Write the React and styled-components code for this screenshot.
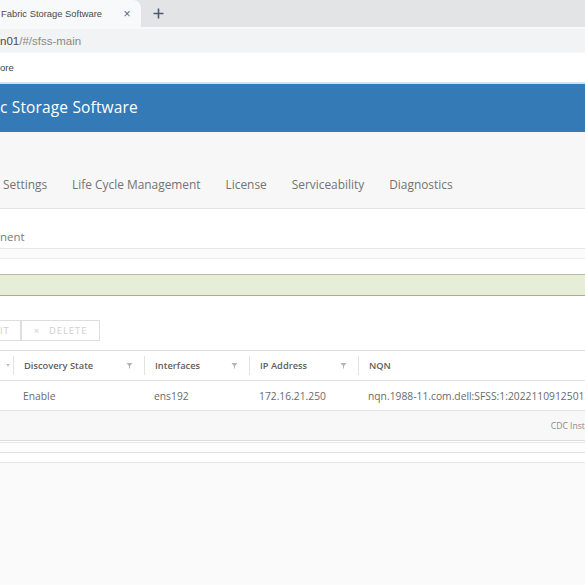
import React from "react";
import styled, { createGlobalStyle } from "styled-components";

const Global = createGlobalStyle`
  html, body { margin: 0; padding: 0; background: #fafafa; }
  body { font-family: "Open Sans", "Liberation Sans", sans-serif; overflow: hidden; }
  #root { width: 585px; height: 585px; overflow: hidden; }
`;

const Page = styled.div`
  width: 585px;
  height: 585px;
  display: flex;
  flex-direction: column;
  background: #fafafa;
  overflow: hidden;
`;

const TabStrip = styled.div`
  height: 27px;
  background: #e3e4e6;
  display: flex;
  align-items: stretch;
  flex-shrink: 0;
`;

const ActiveTab = styled.div`
  width: 141px;
  background: #f8f9fa;
  border-top-right-radius: 8px;
  display: flex;
  align-items: center;
  padding-left: 1px;
  box-sizing: border-box;
  font-family: "Liberation Sans", Arial, sans-serif;
  font-size: 9.4px;
  color: #4a4a4a;
`;

const TabTitle = styled.span`
  flex: 1;
  white-space: nowrap;
`;

const TabClose = styled.span`
  width: 10px;
  margin-right: 9px;
  display: flex;
  justify-content: center;
  color: #666;
  font-size: 12px;
`;

const NewTab = styled.div`
  width: 34px;
  display: flex;
  align-items: center;
  justify-content: center;
`;

const Toolbar = styled.div`
  height: 26px;
  background: #f8f9fa;
  padding-top: 2px;
  flex-shrink: 0;
  box-sizing: border-box;
  display: flex;
`;

const Omnibox = styled.div`
  flex: 1;
  height: 23px;
  background: #f1f3f4;
  display: flex;
  align-items: center;
  font-family: "Liberation Sans", Arial, sans-serif;
  font-size: 11.5px;
  color: #8a8a8a;
  white-space: nowrap;
`;

const Host = styled.span`
  color: #4a4a4a;
`;

const Bookmarks = styled.div`
  height: 29px;
  background: #ffffff;
  display: flex;
  align-items: center;
  font-family: "Liberation Sans", Arial, sans-serif;
  font-size: 9.5px;
  color: #444;
  border-bottom: 2px solid #cfe3f1;
  flex-shrink: 0;
`;

const Header = styled.div`
  height: 48px;
  background: #337ab7;
  color: #ffffff;
  display: flex;
  align-items: center;
  padding-bottom: 2px;
  box-sizing: border-box;
  font-size: 15.5px;
  letter-spacing: 0.15px;
  flex-shrink: 0;
  white-space: nowrap;
`;

const SubNav = styled.div`
  height: 77px;
  background: #f7f7f7;
  border-bottom: 1px solid #e4e4e4;
  display: flex;
  align-items: flex-end;
  padding-bottom: 16px;
  box-sizing: border-box;
  flex-shrink: 0;
`;

const NavItem = styled.span`
  font-size: 11.9px;
  color: #747474;
  white-space: nowrap;
  margin-left: ${(p) => p.$gap}px;
`;

const Content = styled.div`
  background: #ffffff;
  display: flex;
  flex-direction: column;
  flex-shrink: 0;
`;

const Breadcrumb = styled.div`
  height: 39px;
  display: flex;
  align-items: center;
  padding-top: 15px;
  box-sizing: border-box;
  font-size: 11.5px;
  color: #7a7a7a;
`;

const Divider = styled.div`
  height: 9px;
  border-top: 1px solid #e6e6e6;
  border-bottom: 1px solid #ececec;
  background: #fbfbfb;
`;

const Banner = styled.div`
  margin-top: 15px;
  height: 20px;
  background: #e6eed7;
  border-top: 1px solid #b5bf9f;
  border-bottom: 1px solid #a5b08a;
`;

const Actions = styled.div`
  margin-top: 24px;
  height: 21px;
  display: flex;
`;

const ActionButton = styled.div`
  height: 21px;
  box-sizing: border-box;
  border: 1px solid #dedede;
  border-left: ${(p) => (p.$cut ? "none" : "1px solid #dedede")};
  width: ${(p) => p.$w}px;
  display: flex;
  align-items: center;
  justify-content: ${(p) => (p.$cut ? "flex-start" : "center")};
  gap: 9px;
  font-size: 9.5px;
  letter-spacing: 0.9px;
  color: #cfcfcf;
  text-transform: uppercase;
`;

const Grid = styled.div`
  margin-top: 9px;
  border-top: 1px solid #dcdcdc;
  display: flex;
  flex-direction: column;
`;

const Row = styled.div`
  height: 30px;
  display: grid;
  grid-template-columns: 13px 131px 105px 109px 1fr;
  border-bottom: 1px solid #e2e2e2;
  box-sizing: border-box;
`;

const HeadCell = styled.div`
  display: flex;
  align-items: center;
  justify-content: space-between;
  padding: 0 11px 0 10px;
  border-left: ${(p) => (p.$first ? "none" : "1px solid #e3e3e3")};
  margin: ${(p) => (p.$first ? "0" : "5px 0")};
  font-size: 9.3px;
  font-weight: 600;
  color: #5e5e5e;
  white-space: nowrap;
  overflow: hidden;
`;

const Cell = styled.div`
  display: flex;
  align-items: center;
  padding-left: ${(p) => (p.$first ? 0 : 10)}px;
  font-size: 10.3px;
  color: #6a6a6a;
  white-space: nowrap;
  overflow: hidden;
`;

const Footer = styled.div`
  height: 30px;
  background: #f8f8f8;
  border-bottom: 1px solid #dcdcdc;
  display: flex;
  align-items: center;
  justify-content: flex-end;
  font-size: 8.6px;
  color: #8a8a8a;
  white-space: nowrap;
  box-sizing: border-box;
  overflow: hidden;
`;

const FooterText = styled.span`
  margin-right: -23px;
`;

const Trail = styled.div`
  height: ${(p) => p.$h}px;
  border-bottom: 1px solid ${(p) => p.$c};
  background: ${(p) => p.$bg};
  box-sizing: border-box;
`;

const Rest = styled.div`
  flex: 1;
  background: #fafafa;
`;

const Filter = ({ cut }) => (
  <svg width="7" height="7" viewBox="0 0 7 7" style={cut ? { marginLeft: -4 } : undefined}>
    <path d="M0.5 1 H6.5 L4 4 V6.5 H3 V4 Z" fill="#b5b5b5" />
  </svg>
);

const Plus = () => (
  <svg width="11" height="11" viewBox="0 0 11 11">
    <path d="M5.5 0.5 V10.5 M0.5 5.5 H10.5" stroke="#4a5a70" strokeWidth="1.6" />
  </svg>
);

const columns = ["Discovery State", "Interfaces", "IP Address", "NQN"];
const row = ["Enable", "ens192", "172.16.21.250", "nqn.1988-11.com.dell:SFSS:1:20221109125013"];

export default function App() {
  return (
    <Page>
      <Global />
      <TabStrip>
        <ActiveTab>
          <TabTitle>Fabric Storage Software</TabTitle>
          <TabClose>×</TabClose>
        </ActiveTab>
        <NewTab>
          <Plus />
        </NewTab>
      </TabStrip>
      <Toolbar>
        <Omnibox>
          <Host>n01</Host>/#/sfss-main
        </Omnibox>
      </Toolbar>
      <Bookmarks>ore</Bookmarks>
      <Header>c Storage Software</Header>
      <SubNav>
        <NavItem $gap={3}>Settings</NavItem>
        <NavItem $gap={25}>Life Cycle Management</NavItem>
        <NavItem $gap={25}>License</NavItem>
        <NavItem $gap={25}>Serviceability</NavItem>
        <NavItem $gap={25}>Diagnostics</NavItem>
      </SubNav>
      <Content>
        <Breadcrumb>nent</Breadcrumb>
        <Divider />
        <Banner />
        <Actions>
          <ActionButton $cut $w={21}>it</ActionButton>
          <ActionButton $w={79}>
            <span>×</span>
            <span>Delete</span>
          </ActionButton>
        </Actions>
        <Grid>
          <Row>
            <HeadCell $first>
              <Filter cut />
            </HeadCell>
            {columns.map((c, i) => (
              <HeadCell key={c}>
                <span>{c}</span>
                {i < columns.length - 1 && <Filter />}
              </HeadCell>
            ))}
          </Row>
          <Row>
            <Cell $first />
            {row.map((v) => (
              <Cell key={v}>{v}</Cell>
            ))}
          </Row>
          <Footer>
            <FooterText>CDC Instances</FooterText>
          </Footer>
        </Grid>
        <Trail $h={2} $c="#e8e8e8" $bg="#ffffff" />
      </Content>
      <Trail $h={10} $c="#e2e2e2" $bg="#fdfdfd" />
      <Trail $h={10} $c="#e6e6e6" $bg="#ffffff" />
      <Rest />
    </Page>
  );
}
